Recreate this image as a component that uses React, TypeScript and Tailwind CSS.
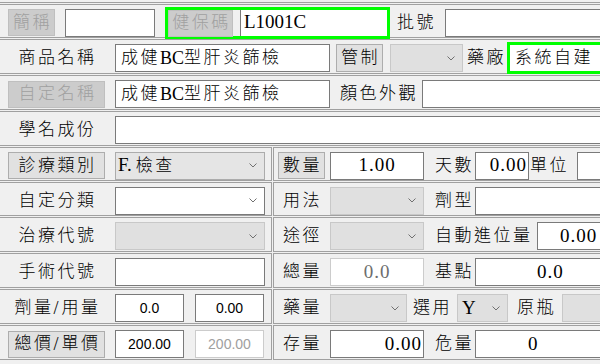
import React from "react";

const cjk = "text-[17px] tracking-[2.5px] font-light";
const inp = "h-[28px] bg-white border border-[#7a7a7a] flex items-center shrink-0";
const inpOff = "h-[28px] bg-white border border-[#cccccc] flex items-center shrink-0";
const btnOn =
  "h-[27px] bg-[#e1e1e1] border border-[#adadad] flex items-center justify-center shrink-0";
const btnOff =
  "h-[27px] bg-[#cccccc] border border-[#bfbfbf] text-[#a0a0a0] flex items-center justify-center shrink-0";
const selOff = "h-[28px] bg-[#e0e0e0] border border-[#c8c8c8] flex items-center shrink-0";
const selOn = "h-[28px] bg-[#e5e5e5] border border-[#acacac] flex items-center shrink-0";
const selWhite = "h-[28px] bg-white border border-[#7a7a7a] flex items-center shrink-0";
const label = "shrink-0 flex items-center";
const num = "text-[19px] tracking-[1px]";
const lat = "text-[18px]";
const sans = "font-['Liberation_Sans',sans-serif] text-[14px]";

function Chevron() {
  return (
    <svg width="8" height="5" viewBox="0 0 8 5" className="ml-auto mr-[7px] shrink-0">
      <path d="M0.5 0.5 L4 4 L7.5 0.5" fill="none" stroke="#707070" strokeWidth="1" />
    </svg>
  );
}

export default function App() {
  return (
    <div className="w-[600px] h-[364px] overflow-hidden bg-[#f0f0f0] text-black font-['Liberation_Serif','Noto_Sans_CJK_TC',serif]">
      <div className="ml-[-4px] w-[720px] flex flex-col">
        <div className="h-[3px] border-b border-[#a0a0a0]" />

        {/* Row 1 */}
        <div className="mt-[1px] h-[34px] border border-[#a0a0a0] flex items-center pt-[3px] pl-[11px]">
          <div className={btnOff + " w-[47px]"}>
            <span className={cjk + " pl-[2px]"}>簡稱</span>
          </div>
          <div className={inp + " ml-[10px] w-[90px]"} />
          <div className="ml-[10px] w-[225px] h-[32px] border-[3px] border-[#00ff00] flex shrink-0">
            <div className={btnOff + " w-[65px] h-[26px]"}>
              <span className={cjk + " pl-[2px]"}>健保碼</span>
            </div>
            <div className="ml-[7px] flex-1 h-[26px] bg-white border-l border-[#7a7a7a] flex items-center pl-[3px]">
              <span className="text-[19px] tracking-[0px]">L1001C</span>
            </div>
          </div>
          <div className={label + " ml-[7px] w-[39px]"}>
            <span className={cjk}>批號</span>
          </div>
          <div className={inp + " ml-[9px] w-[200px]"} />
        </div>

        {/* Row 2 */}
        <div className="mt-[1px] h-[35px] border border-[#a0a0a0] flex items-center pt-[3px] pl-[11px]">
          <div className={label + " w-[97px] justify-center"}>
            <span className={cjk + " pl-[2px]"}>商品名稱</span>
          </div>
          <div className={inp + " ml-[10px] w-[215px] pl-[5px]"}>
            <span className={cjk}>成健</span>
            <span className={lat}>BC</span>
            <span className={cjk}>型肝炎篩檢</span>
          </div>
          <div className={btnOn + " ml-[6px] w-[47px] h-[28px]"}>
            <span className={cjk + " pl-[2px]"}>管制</span>
          </div>
          <div className={selOff + " ml-[7px] w-[73px]"}>
            <Chevron />
          </div>
          <div className={label + " ml-[4px] w-[39px]"}>
            <span className={cjk}>藥廠</span>
          </div>
          <div className="ml-[1px] w-[120px] h-[32px] border-[3px] border-[#00ff00] bg-white flex items-center pl-[5px] shrink-0">
            <span className={cjk}>系統自建</span>
          </div>
        </div>

        {/* Row 3 */}
        <div className="mt-[1px] h-[35px] border border-[#a0a0a0] flex items-center pt-[3px] pl-[11px]">
          <div className={btnOff + " w-[97px]"}>
            <span className={cjk + " pl-[2px]"}>自定名稱</span>
          </div>
          <div className={inp + " ml-[10px] w-[215px] pl-[5px]"}>
            <span className={cjk}>成健</span>
            <span className={lat}>BC</span>
            <span className={cjk}>型肝炎篩檢</span>
          </div>
          <div className={label + " ml-[10px] w-[78px]"}>
            <span className={cjk}>顏色外觀</span>
          </div>
          <div className={inp + " ml-[4px] w-[220px]"} />
        </div>

        {/* Row 4 */}
        <div className="mt-[1px] h-[35px] border border-[#a0a0a0] flex items-center pt-[3px] pl-[11px]">
          <div className={label + " w-[97px] justify-center"}>
            <span className={cjk + " pl-[2px]"}>學名成份</span>
          </div>
          <div className={inp + " ml-[10px] w-[520px]"} />
        </div>

        {/* Row 5 */}
        <div className="mt-[1px] h-[34px] flex gap-[1px]">
          <div className="w-[276px] shrink-0 border border-[#a0a0a0] flex items-center pt-[3px] pl-[11px]">
            <div className={btnOn + " w-[97px]"}>
              <span className={cjk + " pl-[2px]"}>診療類別</span>
            </div>
            <div className={selOn + " ml-[10px] w-[150px] pl-[2px]"}>
              <span className="text-[19px] pr-[4px]">F.</span>
              <span className={cjk}>檢查</span>
              <Chevron />
            </div>
          </div>
          <div className="flex-1 border border-[#a0a0a0] flex items-center pt-[3px] pl-[4px]">
            <div className={btnOn + " w-[47px]"}>
              <span className={cjk + " pl-[2px]"}>數量</span>
            </div>
            <div className={inp + " ml-[5px] w-[94px] justify-center"}>
              <span className={num}>1.00</span>
            </div>
            <div className={label + " ml-[11px] w-[40px]"}>
              <span className={cjk}>天數</span>
            </div>
            <div className={inp + " w-[54px] justify-end pr-[1px]"}>
              <span className={num}>0.00</span>
            </div>
            <div className={label + " ml-[1px] w-[39px]"}>
              <span className={cjk}>單位</span>
            </div>
            <div className={inp + " ml-[8px] w-[100px]"} />
          </div>
        </div>

        {/* Row 6 */}
        <div className="mt-[1px] h-[34px] flex gap-[1px]">
          <div className="w-[276px] shrink-0 border border-[#a0a0a0] flex items-center pt-[3px] pl-[11px]">
            <div className={label + " w-[97px] justify-center"}>
              <span className={cjk + " pl-[2px]"}>自定分類</span>
            </div>
            <div className={selWhite + " ml-[10px] w-[150px]"}>
              <Chevron />
            </div>
          </div>
          <div className="flex-1 border border-[#a0a0a0] flex items-center pt-[3px] pl-[4px]">
            <div className={label + " w-[47px] justify-center"}>
              <span className={cjk + " pl-[2px]"}>用法</span>
            </div>
            <div className={selOff + " ml-[5px] w-[94px]"}>
              <Chevron />
            </div>
            <div className={label + " ml-[11px] w-[40px]"}>
              <span className={cjk}>劑型</span>
            </div>
            <div className={inp + " w-[200px]"} />
          </div>
        </div>

        {/* Row 7 */}
        <div className="mt-[1px] h-[35px] flex gap-[1px]">
          <div className="w-[276px] shrink-0 border border-[#a0a0a0] flex items-center pt-[3px] pl-[11px]">
            <div className={label + " w-[97px] justify-center"}>
              <span className={cjk + " pl-[2px]"}>治療代號</span>
            </div>
            <div className={selOff + " ml-[10px] w-[150px]"}>
              <Chevron />
            </div>
          </div>
          <div className="flex-1 border border-[#a0a0a0] flex items-center pt-[3px] pl-[4px]">
            <div className={label + " w-[47px] justify-center"}>
              <span className={cjk + " pl-[2px]"}>途徑</span>
            </div>
            <div className={selOff + " ml-[5px] w-[94px]"}>
              <Chevron />
            </div>
            <div className={label + " ml-[11px] w-[102px]"}>
              <span className={cjk}>自動進位量</span>
            </div>
            <div className={inp + " w-[120px] pl-[22px]"}>
              <span className={num}>0.00</span>
            </div>
          </div>
        </div>

        {/* Row 8 */}
        <div className="mt-[1px] h-[35px] flex gap-[1px]">
          <div className="w-[276px] shrink-0 border border-[#a0a0a0] flex items-center pt-[3px] pl-[11px]">
            <div className={label + " w-[97px] justify-center"}>
              <span className={cjk + " pl-[2px]"}>手術代號</span>
            </div>
            <div className={inp + " ml-[10px] w-[150px]"} />
          </div>
          <div className="flex-1 border border-[#a0a0a0] flex items-center pt-[3px] pl-[4px]">
            <div className={label + " w-[47px] justify-center"}>
              <span className={cjk + " pl-[2px]"}>總量</span>
            </div>
            <div className={inpOff + " ml-[5px] w-[94px] justify-center text-[#6d6d6d]"}>
              <span className={num}>0.0</span>
            </div>
            <div className={label + " ml-[11px] w-[40px]"}>
              <span className={cjk}>基點</span>
            </div>
            <div className={inp + " w-[200px] pl-[61px]"}>
              <span className={num}>0.0</span>
            </div>
          </div>
        </div>

        {/* Row 9 */}
        <div className="mt-[1px] h-[35px] flex gap-[1px]">
          <div className="w-[276px] shrink-0 border border-[#a0a0a0] flex items-center pt-[3px] pl-[11px]">
            <div className={label + " w-[97px] justify-center"}>
              <span className={cjk + " pl-[2px]"}>劑量</span>
              <span className="text-[18px] pr-[3px]">/</span>
              <span className={cjk}>用量</span>
            </div>
            <div className={inp + " ml-[10px] w-[69px] justify-center"}>
              <span className={sans}>0.0</span>
            </div>
            <div className={inp + " ml-[11px] w-[69px] justify-center"}>
              <span className={sans}>0.00</span>
            </div>
          </div>
          <div className="flex-1 border border-[#a0a0a0] flex items-center pt-[3px] pl-[4px]">
            <div className={label + " w-[47px] justify-center"}>
              <span className={cjk + " pl-[2px]"}>藥量</span>
            </div>
            <div className={selOff + " ml-[5px] w-[77px]"}>
              <Chevron />
            </div>
            <div className={label + " ml-[6px] w-[39px]"}>
              <span className={cjk}>選用</span>
            </div>
            <div className={selOff + " ml-[5px] w-[51px] pl-[4px]"}>
              <span className="text-[19px]">Y</span>
              <Chevron />
            </div>
            <div className={label + " ml-[9px] w-[40px]"}>
              <span className={cjk}>原瓶</span>
            </div>
            <div className={selOff + " ml-[5px] w-[100px]"} />
          </div>
        </div>

        {/* Row 10 */}
        <div className="mt-[1px] h-[35px] flex gap-[1px]">
          <div className="w-[276px] shrink-0 border border-[#a0a0a0] flex items-center pt-[3px] pl-[11px]">
            <div className={btnOn + " w-[97px]"}>
              <span className={cjk + " pl-[2px]"}>總價</span>
              <span className="text-[18px] pr-[3px]">/</span>
              <span className={cjk}>單價</span>
            </div>
            <div className={inp + " ml-[10px] w-[69px] justify-center"}>
              <span className={sans}>200.00</span>
            </div>
            <div className={inpOff + " ml-[11px] w-[69px] justify-center text-[#a0a0a0]"}>
              <span className={sans}>200.00</span>
            </div>
          </div>
          <div className="flex-1 border border-[#a0a0a0] flex items-center pt-[3px] pl-[4px]">
            <div className={label + " w-[47px] justify-center"}>
              <span className={cjk + " pl-[2px]"}>存量</span>
            </div>
            <div className={inp + " ml-[5px] w-[94px] justify-end pr-[1px]"}>
              <span className={num}>0.00</span>
            </div>
            <div className={label + " ml-[11px] w-[40px]"}>
              <span className={cjk}>危量</span>
            </div>
            <div className={inp + " w-[200px] pl-[52px]"}>
              <span className={num}>0</span>
            </div>
          </div>
        </div>
      </div>
    </div>
  );
}
